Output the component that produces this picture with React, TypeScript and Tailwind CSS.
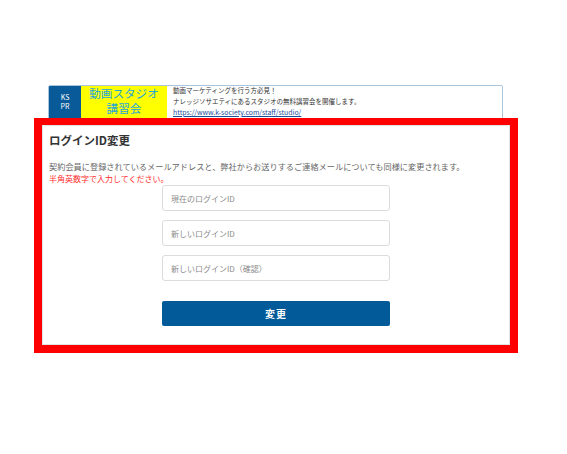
import React from "react"

const jp = { fontFamily: '"Noto Sans CJK JP", "Noto Sans", sans-serif' }

function Banner() {
  return (
    <div className="ml-[48px] flex h-[35px] w-[455px] overflow-hidden rounded-[2px] border border-[#a9c5de] bg-white">
      {/* KS PR label */}
      <div className="flex w-[32px] flex-col items-center bg-[#085a98] pt-[7px] text-[7px] leading-[9px] text-white">
        <span>KS</span>
        <span>PR</span>
      </div>
      {/* yellow title */}
      <div className="flex w-[86px] flex-col items-center bg-[#ffff00] text-[11.6px] leading-[15px] text-[#25a6d8]">
        <span>動画スタジオ</span>
        <span>講習会</span>
      </div>
      {/* body */}
      <div className="-mt-[1px] flex flex-col pl-[6px] text-[6.5px] leading-[11px] text-[#333]">
        <span>動画マーケティングを行う方必見！</span>
        <span>ナレッジソサエティにあるスタジオの無料講習会を開催します。</span>
        <a href="#" className="text-[6.9px] text-[#1b4f9c] underline">
          https://www.k-society.com/staff/studio/
        </a>
      </div>
    </div>
  )
}

function Field({ placeholder }: { placeholder: string }) {
  return (
    <input
      type="text"
      placeholder={placeholder}
      className="h-[26px] w-[228px] rounded-[3px] border border-[#dcdcdc] bg-white px-[8px] text-[8px] text-[#333] outline-none placeholder:text-[#8a8a8a]"
      style={jp}
    />
  )
}

export default function App() {
  return (
    <div className="h-[454px] w-full overflow-hidden bg-white pt-[85px]" style={jp}>
      <Banner />

      {/* login id change card (red frame) */}
      <div className="relative z-10 -mt-[2px] ml-[34px] h-[235px] w-[484px] border-[8px] border-t-[7px] border-[#ff0000] bg-white">
        <div className="flex h-full flex-col border border-[#e3e3e3] px-[6px] pt-[6px]">
          <h2 className="text-[11.5px] font-bold leading-[16px] text-[#333]">ログインID変更</h2>

          <p className="mt-[12px] text-[8.2px] leading-[13px] text-[#666]">
            契約会員に登録されているメールアドレスと、弊社からお送りするご連絡メールについても同様に変更されます。
          </p>
          <p className="text-[8px] leading-[11px] text-[#ff2b2b]">半角英数字で入力してください。</p>

          <div className="mt-[1px] flex flex-col items-center gap-[9px]">
            <Field placeholder="現在のログインID" />
            <Field placeholder="新しいログインID" />
            <Field placeholder="新しいログインID（確認）" />
          </div>

          <div className="mt-[20px] flex justify-center">
            <button className="h-[25px] w-[228px] rounded-[2px] bg-[#025a99] text-[10px] font-bold tracking-[1px] text-white">
              変更
            </button>
          </div>
        </div>
      </div>
    </div>
  )
}
